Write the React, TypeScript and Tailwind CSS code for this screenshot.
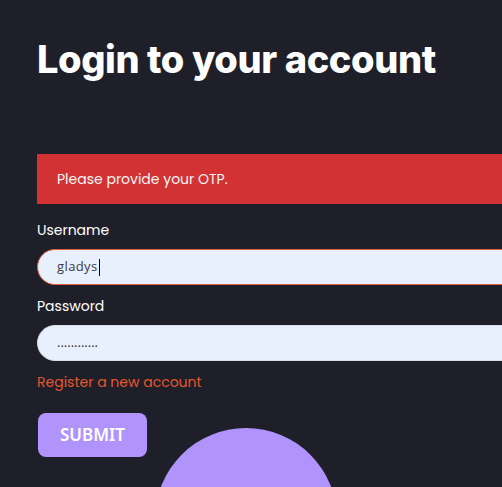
export default function App() {
  return (
    <div className="relative h-[487px] w-[502px] overflow-hidden bg-[#1f1f29] font-['Poppins','Noto_Sans',sans-serif] text-white">
      <div className="w-[700px] pl-[37px] pt-[35px]">
        <h1 className="font-['Inter',sans-serif] text-[38px] font-extrabold leading-[48px] tracking-[-0.4px]">
          Login to your account
        </h1>
        <div className="mt-[71px] flex h-[50px] items-center bg-[#d23233] pl-[20px] text-[14px] text-[#f5f5f5]">
          Please provide your OTP.
        </div>
        <form className="flex flex-col">
          <label className="mt-[15px] text-[14px] leading-[22px]">Username</label>
          <div className="mt-[8px] flex h-[36px] items-center rounded-l-full border border-[#e0603a] bg-[#e8f0fe] pl-[19px] font-['Open_Sans',sans-serif] text-[13px] tracking-[0.4px] text-[#3a3a48]">
            gladys<span className="ml-[1px] inline-block h-[17px] w-[1px] bg-black" />
          </div>
          <label className="mt-[10px] text-[14px] leading-[22px]">Password</label>
          <div className="mt-[8px] flex h-[36px] items-center rounded-l-full border border-[#d8dce4] bg-[#e8f0fe] pl-[19px] font-['Open_Sans',sans-serif] text-[13px] text-[#2c2c3a]">
            ............
          </div>
          <a className="mt-[10px] text-[14px] leading-[22px] text-[#e4572e]">Register a new account</a>
          <button
            type="button"
            className="ml-[1px] mt-[20px] h-[44px] w-[109px] rounded-[8px] bg-[#b093fb] font-['Noto_Sans',sans-serif] text-[17px] font-semibold text-white"
          >
            SUBMIT
          </button>
        </form>
      </div>
      <div className="absolute left-[155px] top-[428px] h-[182px] w-[182px] rounded-full bg-[#b093fb]" />
    </div>
  );
}
